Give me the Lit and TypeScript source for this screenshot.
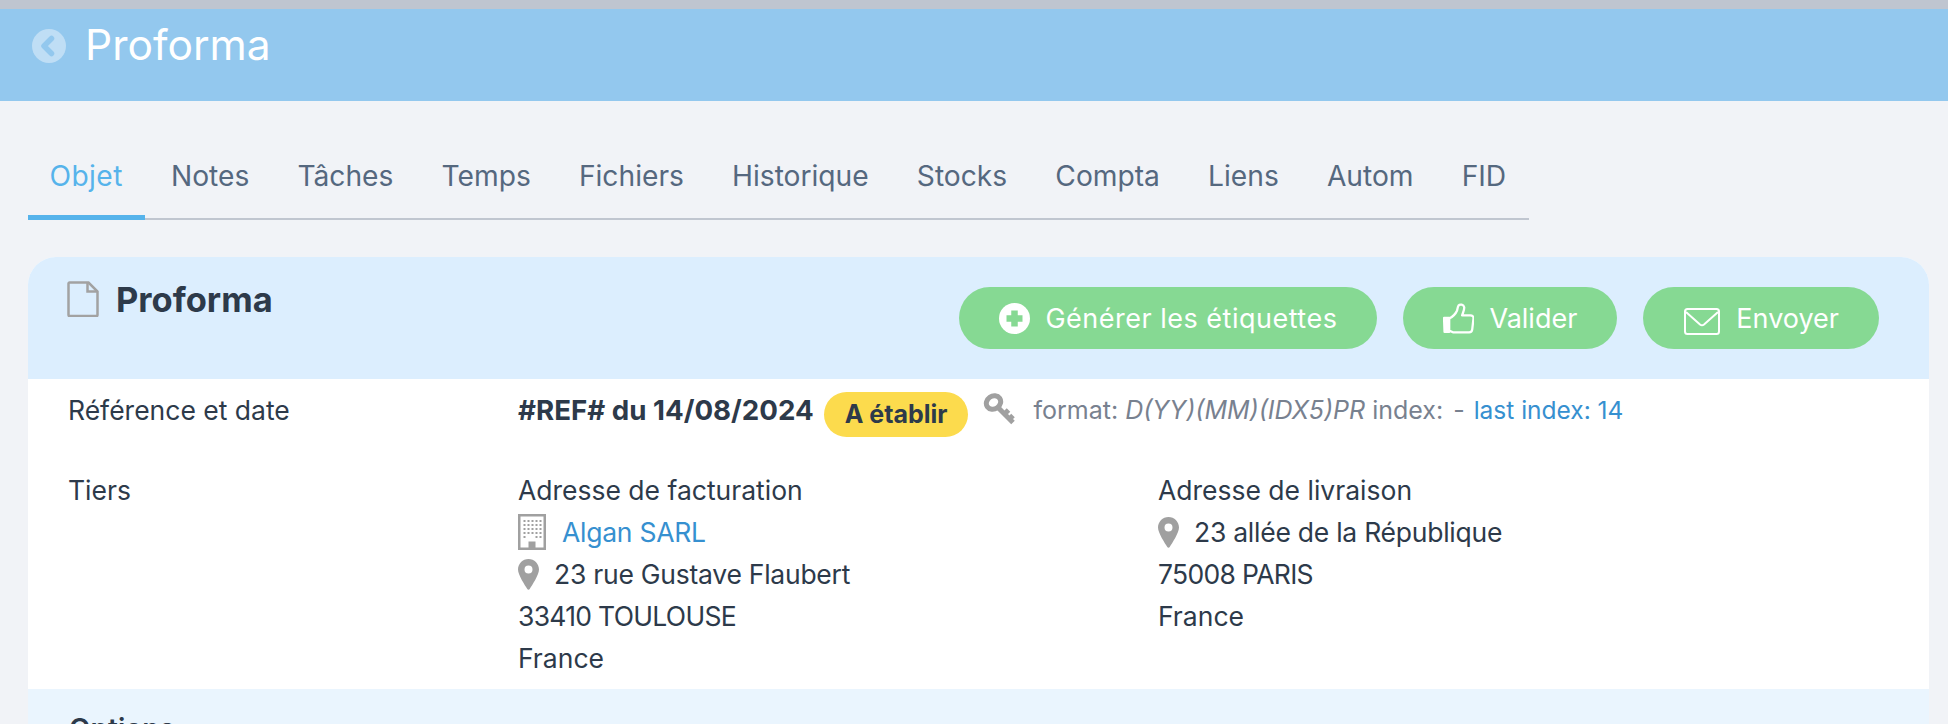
import { LitElement, css, html, svg } from "lit";
import { customElement } from "lit/decorators.js";

const tabs = ["Objet", "Notes", "Tâches", "Temps", "Fichiers", "Historique", "Stocks", "Compta", "Liens", "Autom", "FID"];

const pin = html`<svg class="pin" viewBox="0 0 21 31"><path fill-rule="evenodd" d="M10.5 0C4.7 0 0 4.7 0 10.5c0 5.6 7 15.6 9.3 19.6.5.9 1.900.9 2.400 0C14 26.100 21 16.100 21 10.500 21 4.700 16.300 0 10.500 0zm0 6.500a4 4 0 1 1 0 8 4 4 0 0 1 0-8z"/></svg>`;

const windows = [6, 10, 14, 18, 22].flatMap((y) =>
  [5.5, 9.5, 13.5, 17.5, 21.5]
    .filter((x) => y < 22 || x < 9 || x > 17)
    .map((x) => svg`<rect x=${x} y=${y} width="2" height="2" />`)
);

@customElement("app-root")
export class AppRoot extends LitElement {
  render() {
    return html`
      <div class="topline"></div>
      <header class="banner">
        <svg class="back" viewBox="0 0 34 34">
          <circle cx="17" cy="17" r="17" fill="#bfdef5" />
          <path d="M19.500 9.500 12 17l7.500 7.500" fill="none" stroke="#93c8ee" stroke-width="5.500" stroke-linecap="round" stroke-linejoin="round" />
        </svg>
        <h1>Proforma</h1>
      </header>

      <nav class="tabs">
        ${tabs.map((t, i) => html`<a class=${i === 0 ? "tab active" : "tab"}>${t}</a>`)}
      </nav>

      <section class="card">
        <div class="card-head">
          <div class="card-title">
            <svg class="doc" viewBox="0 0 32 36">
              <path d="M2.500 1.500h19l9 9v23.500a1 1 0 0 1-1 1h-27a1 1 0 0 1-1-1v-31.500a1 1 0 0 1 1-1z" fill="none" stroke="#a2a2a2" stroke-width="2.500" />
              <path d="M20.500 2v8.500h9.500" fill="none" stroke="#a2a2a2" stroke-width="2.500" />
            </svg>
            <h2>Proforma</h2>
          </div>
          <div class="actions">
            <button class="wide">
              <svg class="ico" viewBox="0 0 31 31">
                <circle cx="15.500" cy="15.500" r="15.500" fill="#fff" />
                <path d="M15.500 7.500v16M7.500 15.500h16" stroke="#86d993" stroke-width="6.500" stroke-linejoin="round" />
              </svg>
              Générer les étiquettes
            </button>
            <button>
              <svg class="ico" viewBox="0 0 30 30" fill="none" stroke="#fff" stroke-width="2.200" stroke-linejoin="round" stroke-linecap="round">
                <path d="M1 14.500h5v13.500H1.500z" fill="#fff" />
                <path d="M6 15c3-1.500 6-4 7.500-7.500.7-1.800.5-3.500 1.500-5 1.500-1.800 5-1 5.500 1.500.4 2.500-1.300 5.500-2 8h8c2 0 3.200 1.200 3 3l-1.200 10.500c-.2 1.800-1.300 3-3 3H11c-2 0-3-1.500-5-1.500" />
              </svg>
              Valider
            </button>
            <button>
              <svg class="mail" viewBox="0 0 36 27" fill="none" stroke="#fff" stroke-width="2" stroke-linejoin="round" stroke-linecap="round">
                <rect x="1" y="1" width="34" height="25" rx="2.500" />
                <path d="M2.500 4.500 16 16.500c1.200 1 2.800 1 4 0L33.500 4.500" />
              </svg>
              Envoyer
            </button>
          </div>
        </div>

        <div class="row ref">
          <div class="label">Référence et date</div>
          <div class="ref-value">
            <strong>#REF# du 14/08/2024</strong>
            <span class="badge">A établir</span>
            <svg class="key" viewBox="0 0 33 32" fill="none" stroke="#a0a0a0" stroke-width="5">
              <ellipse cx="10.500" cy="9.500" rx="7.500" ry="6.500" transform="rotate(-35 10.500 9.500)" />
              <path d="M15.500 15 30 29.500M21.500 21l4-4M26.500 26l3.500-3.500" />
            </svg>
            <span class="format">format: <em>D(YY)(MM)(IDX5)PR</em> index:</span>
            <span class="format dash">-</span>
            <a class="link last">last index: 14</a>
          </div>
        </div>

        <div class="row tiers">
          <div class="label">Tiers</div>
          <div class="address">
            <div>Adresse de facturation</div>
            <div class="line">
              <svg class="building" viewBox="0 0 28 36">
                <path fill="#a0a0a0" fill-rule="evenodd" d="M0 0h28v36H0zM2.500 2.500v31h8v-6h7v6h8v-31z" />
                <g fill="#a0a0a0">${windows}</g>
              </svg>
              <a class="link">Algan SARL</a>
            </div>
            <div class="line">${pin}<span>23 rue Gustave Flaubert</span></div>
            <div class="caps">33410 TOULOUSE</div>
            <div>France</div>
          </div>
          <div class="address">
            <div>Adresse de livraison</div>
            <div class="line">${pin}<span>23 allée de la République</span></div>
            <div class="caps">75008 PARIS</div>
            <div>France</div>
          </div>
        </div>

        <div class="options"><h3>Options</h3></div>
      </section>
    `;
  }

  static styles = css`
    :host {
      display: block;
      height: 724px;
      overflow: hidden;
      background: #f1f3f7;
      font-family: Inter, "Liberation Sans", sans-serif;
      color: #2d3a4a;
    }

    .topline {
      height: 9px;
      background: #bfc5d0;
    }
    .banner {
      height: 92px;
      background: #93c8ee;
      display: flex;
      align-items: flex-start;
      padding: 8px 0 0 32px;
      box-sizing: border-box;
      gap: 19px;
    }
    .back {
      width: 34px;
      height: 34px;
      margin-top: 12px;
    }
    h1 {
      margin: 0;
      font-size: 42.500px;
      line-height: 56px;
      font-weight: 400;
      color: #fff;
    }

    .tabs {
      display: flex;
      width: 1501px;
      margin: 46px 0 0 28px;
      height: 73px;
      box-sizing: border-box;
      border-bottom: 2px solid #c0c6d0;
    }
    .tab {
      padding: 14px 22px 0 21.500px;
      margin-right: 4.600px;
      height: 73px;
      box-sizing: border-box;
      font-size: 28.200px;
      line-height: 30px;
      color: #55687f;
    }
    .tab.active {
      color: #56b3eb;
      border-bottom: 5px solid #56b3eb;
      letter-spacing: 0.400px;
    }

    .card {
      margin: 37px 19px 0 28px;
      background: #fff;
      border-radius: 28px 28px 0 0;
      overflow: hidden;
    }
    .card-head {
      height: 122px;
      background: #dceefe;
      display: flex;
      justify-content: space-between;
      box-sizing: border-box;
      padding: 22px 50px 0 39px;
    }
    .card-title {
      display: flex;
      gap: 17px;
      align-items: flex-start;
    }
    .doc {
      width: 32px;
      height: 36px;
      margin-top: 2px;
    }
    h2 {
      margin: 2px 0 0;
      font-size: 34.500px;
      line-height: 38px;
      font-weight: 700;
    }
    .actions {
      display: flex;
      gap: 26px;
      padding-top: 8px;
    }
    button {
      display: flex;
      align-items: center;
      gap: 15px;
      height: 62px;
      padding: 0 40px;
      border: 0;
      border-radius: 31px;
      background: #86d993;
      color: #fff;
      font: 400 27px Inter, sans-serif;
      white-space: nowrap;
    }
    button.wide {
      letter-spacing: 0.500px;
    }
    .ico {
      width: 31px;
      height: 31px;
    }
    .mail {
      width: 36px;
      height: 27px;
      margin: 6px 1px 0;
    }

    .row {
      display: flex;
      font-size: 26.500px;
      line-height: 42px;
    }
    .label {
      width: 490px;
      padding-left: 40px;
      box-sizing: border-box;
      flex: none;
    }
    .ref {
      height: 90px;
      padding-top: 10px;
      box-sizing: border-box;
    }
    .ref-value {
      display: flex;
      align-items: flex-start;
      white-space: nowrap;
    }
    strong {
      font-size: 27.700px;
      font-weight: 700;
    }
    .badge {
      margin: 3px 15px 0 10px;
      height: 45px;
      line-height: 45px;
      padding: 0 21px;
      border-radius: 23px;
      background: #fcdb4d;
      font-size: 25px;
      font-weight: 700;
    }
    .key {
      width: 33px;
      height: 32px;
      margin: 4px 17px 0 0;
    }
    .format {
      color: #78818f;
      font-size: 25px;
    }
    .dash {
      margin-left: 10px;
    }
    .link {
      color: #3690d0;
    }
    .last {
      font-size: 24.500px;
      margin-left: 9px;
    }

    .address {
      width: 640px;
    }
    .line {
      display: flex;
      align-items: center;
      height: 42px;
      letter-spacing: -0.250px;
    }
    .caps {
      letter-spacing: -0.700px;
    }
    .pin {
      width: 21px;
      height: 31px;
      fill: #a0a0a0;
      margin-right: 15px;
      flex: none;
    }
    .building {
      width: 28px;
      height: 36px;
      margin-right: 16px;
      flex: none;
    }
    .tiers {
      height: 220px;
    }

    .options {
      background: #eaf5fe;
      height: 80px;
      padding: 23px 41px 0;
    }
    h3 {
      margin: 0;
      font-size: 28px;
      font-weight: 600;
    }
  `;
}
